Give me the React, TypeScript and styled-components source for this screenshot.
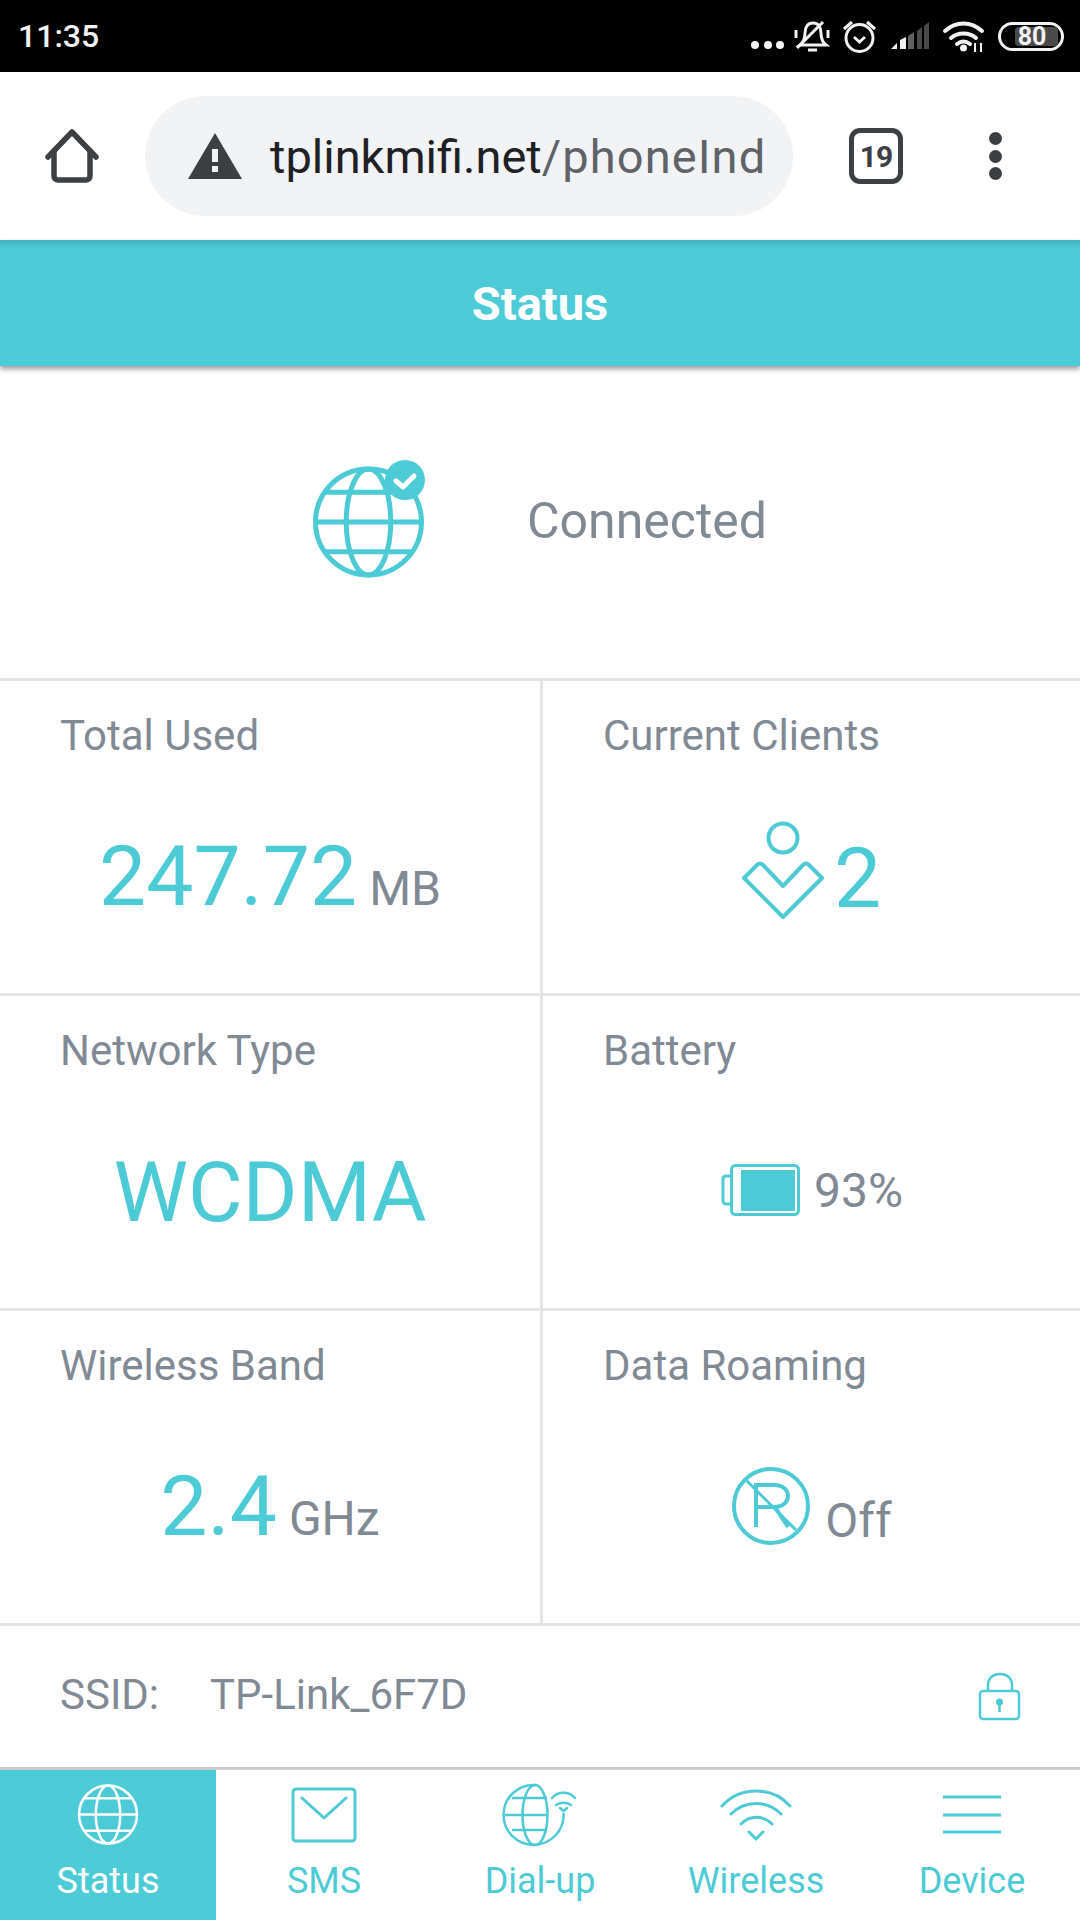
import React from "react";
import styled, { createGlobalStyle } from "styled-components";

const TEAL = "#4ccbd7";
const GREY = "#7f8a94";
const LINE = "#e4e6e6";
const DARK = "#3c4043";

const GlobalStyle = createGlobalStyle`
  html, body {
    margin: 0;
    padding: 0;
    background: #fff;
  }
  * {
    box-sizing: border-box;
  }
`;

const Page = styled.div`
  width: 1080px;
  height: 1920px;
  display: flex;
  flex-direction: column;
  overflow: hidden;
  background: #fff;
  font-family: Roboto, "Liberation Sans", sans-serif;
`;

const StatusBar = styled.div`
  height: 72px;
  background: #000;
  display: flex;
  align-items: center;
  justify-content: space-between;
  padding: 0 0 0 18px;
  color: #f2f2f2;
`;

const Clock = styled.div`
  font-size: 32px;
  font-weight: 500;
`;

const StatusIcons = styled.svg`
  display: block;
  width: 340px;
  height: 72px;
`;

const BrowserBar = styled.div`
  height: 168px;
  display: flex;
  align-items: center;
  padding-left: 44px;
`;

const HomeIcon = styled.svg`
  width: 56px;
  height: 56px;
  flex: none;
`;

const UrlPill = styled.div`
  width: 648px;
  height: 120px;
  margin-left: 45px;
  border-radius: 60px;
  background: #f1f3f4;
  display: flex;
  align-items: center;
  padding-left: 42px;
  flex: none;
`;

const WarnIcon = styled.svg`
  width: 56px;
  height: 48px;
  flex: none;
`;

const UrlText = styled.div`
  margin-left: 27px;
  white-space: nowrap;
  font-size: 47px;
  color: #202124;
  span {
    color: #5f6368;
    letter-spacing: 1.1px;
  }
`;

const TabCount = styled.div`
  width: 54px;
  height: 56px;
  margin-left: 56px;
  border: 5px solid ${DARK};
  border-radius: 11px;
  display: flex;
  align-items: center;
  justify-content: center;
  font-size: 30px;
  font-weight: 700;
  letter-spacing: -1px;
  color: ${DARK};
  flex: none;
`;

const MenuDots = styled.div`
  margin-left: 86px;
  height: 48px;
  display: flex;
  flex-direction: column;
  justify-content: space-between;
  flex: none;
`;

const Dot = styled.div`
  width: 13px;
  height: 13px;
  border-radius: 50%;
  background: ${DARK};
`;

const Header = styled.div`
  height: 126px;
  background: ${TEAL};
  color: #fff;
  font-size: 47px;
  font-weight: 700;
  display: flex;
  align-items: center;
  justify-content: center;
  box-shadow: 0 3px 5px rgba(0, 0, 0, 0.4), inset 0 7px 7px -5px rgba(0, 0, 0, 0.18);
  position: relative;
  z-index: 1;
`;

const ConnectedRow = styled.div`
  height: 315px;
  display: flex;
  align-items: center;
  padding: 0 0 10px 310px;
  border-bottom: 3px solid ${LINE};
`;

const ConnectedIcon = styled.svg`
  width: 120px;
  height: 124px;
  flex: none;
`;

const ConnectedLabel = styled.div`
  margin: 7px 0 0 97px;
  font-size: 50px;
  color: ${GREY};
`;

const Grid = styled.div`
  display: grid;
  grid-template-columns: 543px 537px;
  grid-auto-rows: 315px;
`;

const Cell = styled.div<{ $left?: boolean }>`
  border-bottom: 3px solid ${LINE};
  border-right: ${({ $left }) => ($left ? `3px solid ${LINE}` : "none")};
  padding: 31px 0 0 60px;
  display: flex;
  flex-direction: column;
`;

const CellTitle = styled.div`
  font-size: 42px;
  line-height: 47px;
  color: ${GREY};
`;

const CellBody = styled.div<{ $top?: number; $bottom?: number }>`
  flex: 1;
  display: flex;
  align-items: center;
  justify-content: center;
  margin-left: -60px;
  padding: ${({ $top }) => $top ?? 0}px 0 ${({ $bottom }) => $bottom ?? 0}px;
`;

const BigValue = styled.span`
  font-size: 84px;
  color: ${TEAL};
`;

const ClientCount = styled(BigValue)`
  margin: 19px 0 0 10px;
  line-height: 84px;
`;

const Unit = styled.span`
  font-size: 48px;
  color: ${GREY};
  margin-left: 12px;
`;

const Baseline = styled.div`
  display: flex;
  align-items: baseline;
`;

const CellIcon = styled.svg<{ $w: number; $h: number }>`
  width: ${({ $w }) => $w}px;
  height: ${({ $h }) => $h}px;
  flex: none;
  display: block;
`;

const SideText = styled.span<{ $top?: number }>`
  font-size: 48px;
  color: ${GREY};
  margin: ${({ $top }) => $top ?? 0}px 0 0 14px;
`;

const SsidRow = styled.div`
  height: 141px;
  display: flex;
  align-items: center;
  padding: 0 58px 4px 60px;
  font-size: 42px;
  color: ${GREY};
`;

const SsidKey = styled.div`
  width: 150px;
`;

const SsidValue = styled.div`
  flex: 1;
`;

const LockIcon = styled.svg`
  width: 44px;
  height: 50px;
  margin-top: 4px;
`;

const NavBar = styled.div`
  flex: 1;
  display: grid;
  grid-template-columns: repeat(5, 216px);
  border-top: 3px solid #cbcbcb;
`;

const NavItem = styled.div<{ $active?: boolean }>`
  background: ${({ $active }) => ($active ? TEAL : "#fff")};
  color: ${({ $active }) => ($active ? "#fff" : TEAL)};
  display: flex;
  flex-direction: column;
  align-items: center;
  padding-top: 13px;
  font-size: 36px;
`;

const NavIcon = styled.svg`
  width: 80px;
  height: 64px;
  display: block;
  margin-bottom: 13px;
  flex: none;
`;

const Globe = ({ cx, cy, r, sw }: { cx: number; cy: number; r: number; sw: number }) => (
  <g fill="none" stroke="currentColor" strokeWidth={sw}>
    <circle cx={cx} cy={cy} r={r} />
    <ellipse cx={cx} cy={cy} rx={r * 0.42} ry={r} />
    <line x1={cx - r} y1={cy} x2={cx + r} y2={cy} />
    <line x1={cx - r * 0.82} y1={cy - r * 0.56} x2={cx + r * 0.82} y2={cy - r * 0.56} />
    <line x1={cx - r * 0.82} y1={cy + r * 0.56} x2={cx + r * 0.82} y2={cy + r * 0.56} />
  </g>
);

export default function App() {
  return (
    <Page>
      <GlobalStyle />
      <StatusBar>
        <Clock>11:35</Clock>
        <StatusIcons viewBox="0 0 340 72">
          <g fill="#f2f2f2">
            <circle cx="15" cy="45" r="4" />
            <circle cx="28" cy="45" r="4" />
            <circle cx="40" cy="45" r="4" />
          </g>
          <g fill="none" stroke="#f2f2f2" strokeWidth="3">
            <path d="M60 45c4-3 5-6 5-12 0-6 3-10 8-10s8 4 8 10c0 6 1 9 5 12z" />
            <path d="M68 50h9" />
            <path d="M57 48 83 22" />
            <path d="M56 30v8M88 30v8" />
            <circle cx="119.5" cy="38" r="13.5" />
            <path d="M114 37l5.5 5 5.5-5M104 29l8-7M135 29l-8-7" />
          </g>
          <g fill="#f2f2f2">
            <path d="M151 49l6-6v6z" />
            <path d="M160 49V40l6-3v12z" />
            <path d="M168 49V36l6-4v17z" opacity=".4" />
            <path d="M177 49V31l5-4v22z" opacity=".3" />
            <path d="M184 49V26l5-4v27z" opacity=".3" />
          </g>
          <g fill="none" stroke="#f2f2f2" strokeWidth="4" strokeLinecap="round">
            <path d="M205 31c11-10 26-10 37 0" />
            <path d="M211 38c7-6 18-6 25 0" />
            <path d="M217 44c4-3 9-3 13 0" />
          </g>
          <circle cx="223.5" cy="48" r="3.5" fill="#f2f2f2" />
          <path d="M235 43v9M241 43v9" stroke="#f2f2f2" strokeWidth="2" />
          <rect x="259.5" y="23.5" width="63" height="26" rx="13" fill="none" stroke="#f2f2f2" strokeWidth="3" />
          <rect x="275" y="27" width="43" height="19" rx="4" fill="#4a4a4a" />
          <text x="292" y="45" fontSize="25" fontWeight="700" fill="#f2f2f2" textAnchor="middle" fontFamily="Roboto, sans-serif">80</text>
        </StatusIcons>
      </StatusBar>

      <BrowserBar>
        <HomeIcon viewBox="0 0 56 56" fill="none" stroke={DARK} strokeWidth="5.5" strokeLinecap="round" strokeLinejoin="round">
          <path d="M4 29 28 4l24 25" />
          <path d="M10 24v24a4 4 0 0 0 4 4h28a4 4 0 0 0 4-4V24" />
        </HomeIcon>
        <UrlPill>
          <WarnIcon viewBox="0 0 56 48">
            <path d="M28 1 55 47H1z" fill={DARK} />
            <rect x="25" y="17" width="6" height="13" fill="#f1f3f4" />
            <rect x="25" y="34" width="6" height="6" fill="#f1f3f4" />
          </WarnIcon>
          <UrlText>
            tplinkmifi.net<span>/phoneInd</span>
          </UrlText>
        </UrlPill>
        <TabCount>19</TabCount>
        <MenuDots>
          <Dot />
          <Dot />
          <Dot />
        </MenuDots>
      </BrowserBar>

      <Header>Status</Header>

      <ConnectedRow>
        <ConnectedIcon viewBox="0 0 120 124" color={TEAL}>
          <Globe cx={58.5} cy={67} r={53} sw={5} />
          <circle cx={95} cy={25} r={20} fill={TEAL} />
          <path d="M86 26l7 6 11-11" fill="none" stroke="#fff" strokeWidth="5" strokeLinecap="round" strokeLinejoin="round" />
        </ConnectedIcon>
        <ConnectedLabel>Connected</ConnectedLabel>
      </ConnectedRow>

      <Grid>
        <Cell $left>
          <CellTitle>Total Used</CellTitle>
          <CellBody>
            <Baseline>
              <BigValue>247.72</BigValue>
              <Unit>MB</Unit>
            </Baseline>
          </CellBody>
        </Cell>
        <Cell>
          <CellTitle>Current Clients</CellTitle>
          <CellBody $bottom={13}>
            <CellIcon $w={82} $h={98} viewBox="0 0 82 98" fill="none" stroke={TEAL} strokeWidth="4">
              <circle cx="41" cy="17" r="14.5" />
              <path d="M2 57 15 44q3-3 6 0l20 21 20-21q3-3 6 0l13 13-39 39z" strokeLinejoin="round" />
            </CellIcon>
            <ClientCount>2</ClientCount>
          </CellBody>
        </Cell>
        <Cell $left>
          <CellTitle>Network Type</CellTitle>
          <CellBody $top={3}>
            <BigValue>WCDMA</BigValue>
          </CellBody>
        </Cell>
        <Cell>
          <CellTitle>Battery</CellTitle>
          <CellBody $bottom={2}>
            <CellIcon $w={80} $h={52} viewBox="-2 0 80 52">
              <rect x="9.5" y="1.5" width="67" height="49" rx="4" fill="none" stroke={TEAL} strokeWidth="3" />
              <path d="M9 12H4a3 3 0 0 0-3 3v22a3 3 0 0 0 3 3h5" fill="none" stroke={TEAL} strokeWidth="3" />
              <rect x="19" y="6" width="54" height="41" fill={TEAL} />
            </CellIcon>
            <SideText>93%</SideText>
          </CellBody>
        </Cell>
        <Cell $left>
          <CellTitle>Wireless Band</CellTitle>
          <CellBody>
            <Baseline>
              <BigValue>2.4</BigValue>
              <Unit>GHz</Unit>
            </Baseline>
          </CellBody>
        </Cell>
        <Cell>
          <CellTitle>Data Roaming</CellTitle>
          <CellBody $bottom={1}>
            <CellIcon $w={80} $h={80} viewBox="0 0 80 80" fill="none" stroke={TEAL} strokeWidth="4">
              <circle cx="40" cy="40" r="37" />
              <path d="M15 14 65 64" strokeWidth="3" />
              <path d="M25 61V19h18c9 0 14 5 14 11s-5 11-14 11H25M44 41l13 20" />
            </CellIcon>
            <SideText $top={30}>Off</SideText>
          </CellBody>
        </Cell>
      </Grid>

      <SsidRow>
        <SsidKey>SSID:</SsidKey>
        <SsidValue>TP-Link_6F7D</SsidValue>
        <LockIcon viewBox="0 0 44 50" fill="none" stroke={TEAL} strokeWidth="2.5">
          <path d="M10 19V13C10 6 15 2 22 2s12 4 12 11v6" />
          <rect x="2" y="19" width="39" height="28" rx="3" />
          <circle cx="21.5" cy="30" r="3.5" fill={TEAL} stroke="none" />
          <path d="M21.5 32v8" />
        </LockIcon>
      </SsidRow>

      <NavBar>
        <NavItem $active>
          <NavIcon viewBox="0 0 80 64">
            <Globe cx={40} cy={31.5} r={29} sw={2.5} />
          </NavIcon>
          Status
        </NavItem>
        <NavItem>
          <NavIcon viewBox="0 0 80 64" fill="none" stroke="currentColor" strokeWidth="3">
            <rect x="9" y="6" width="62" height="52" rx="3" />
            <path d="M18 15l22 20 22-20" strokeLinecap="round" strokeLinejoin="round" />
          </NavIcon>
          SMS
        </NavItem>
        <NavItem>
          <NavIcon viewBox="0 0 80 64" fill="none" stroke="currentColor" strokeWidth="2.5">
            <path d="M63.5 30A30 30 0 1 1 36 2" />
            <ellipse cx="35" cy="32" rx="12.5" ry="30" />
            <path d="M5 32h42M12 15h35M12 47h35" />
            <path d="M52 15c6-7 17-7 23 0M56 22c4-3 11-3 15 0M60 25l3.5 3 3.5-3" strokeLinecap="round" />
          </NavIcon>
          Dial-up
        </NavItem>
        <NavItem>
          <NavIcon viewBox="0 0 80 64" fill="none" stroke="currentColor" strokeWidth="3" strokeLinecap="round">
            <path d="M6 23c18-20 50-20 68 0M15 31c14-14 36-14 50 0M25 41c9-9 22-9 31 0M33 49l7 7 7-7" />
          </NavIcon>
          Wireless
        </NavItem>
        <NavItem>
          <NavIcon viewBox="0 0 80 64" stroke="currentColor" strokeWidth="3">
            <path d="M11 14h58M11 32h58M11 49h58" />
          </NavIcon>
          Device
        </NavItem>
      </NavBar>
    </Page>
  );
}
